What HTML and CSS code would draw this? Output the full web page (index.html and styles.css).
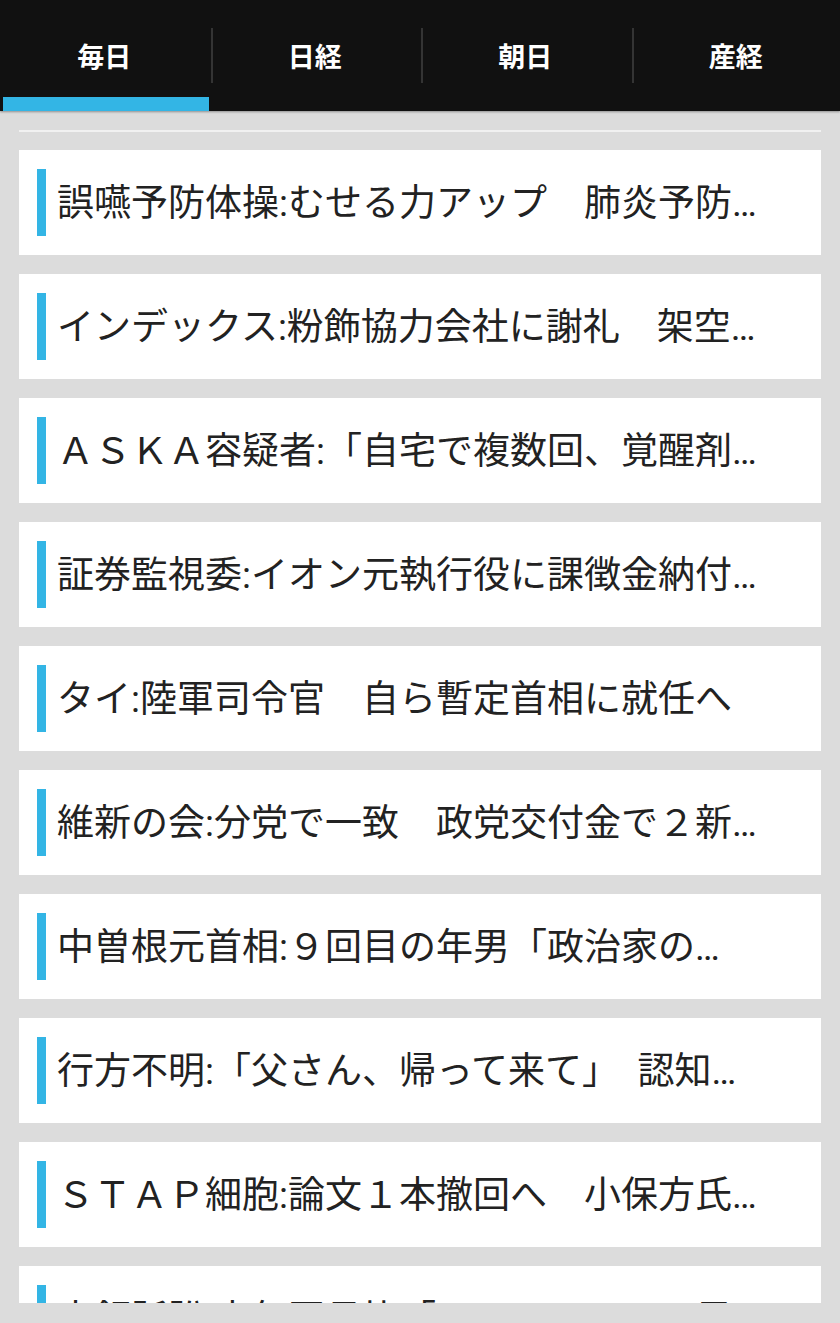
FILE: index.html
```html
<!DOCTYPE html>
<html>
<head>
  <meta charset="utf-8">
  <title>ニュース</title>
  <link rel="stylesheet" href="styles.css">
</head>
<body>
  <!-- Tab bar -->
  <div class="tabs">
    <div class="tab active"><span class="tab-label">毎日</span><span class="tab-indicator"></span></div>
    <div class="tab-divider"></div>
    <div class="tab"><span class="tab-label">日経</span><span class="tab-indicator"></span></div>
    <div class="tab-divider"></div>
    <div class="tab"><span class="tab-label">朝日</span><span class="tab-indicator"></span></div>
    <div class="tab-divider"></div>
    <div class="tab"><span class="tab-label">産経</span><span class="tab-indicator"></span></div>
  </div>
  <!-- News list -->
  <div class="content">
    <div class="rule"></div>
    <div class="list">
      <div class="card"><span class="bar"></span><span class="title">誤嚥予防体操:むせる力アップ　肺炎予防…</span></div>
      <div class="card"><span class="bar"></span><span class="title">インデックス:粉飾協力会社に謝礼　架空…</span></div>
      <div class="card"><span class="bar"></span><span class="title">ＡＳＫＡ容疑者:「自宅で複数回、覚醒剤…</span></div>
      <div class="card"><span class="bar"></span><span class="title">証券監視委:イオン元執行役に課徴金納付…</span></div>
      <div class="card"><span class="bar"></span><span class="title">タイ:陸軍司令官　自ら暫定首相に就任へ</span></div>
      <div class="card"><span class="bar"></span><span class="title">維新の会:分党で一致　政党交付金で２新…</span></div>
      <div class="card"><span class="bar"></span><span class="title">中曽根元首相:９回目の年男「政治家の…</span></div>
      <div class="card"><span class="bar"></span><span class="title">行方不明:「父さん、帰って来て」　認知…</span></div>
      <div class="card"><span class="bar"></span><span class="title">ＳＴＡＰ細胞:論文１本撤回へ　小保方氏…</span></div>
      <div class="card"><span class="bar"></span><span class="title">大飯訴訟:去年同月比「２０００万円不足…</span></div>
    </div>
  </div>
</body>
</html>
```
FILE: styles.css
```css
/*Page*/
html, body {
  margin: 0;
  height: 1323px;
  overflow: hidden;
}
body {
  background-color: #dcdcdc;
  font-family: Roboto, "Noto Sans CJK JP", sans-serif;
}
/*Tab bar*/
.tabs {
  display: flex;
  align-items: stretch;
  height: 111px;
  background-color: #111111;
  box-shadow: 0 1px 2px rgba(0, 0, 0, 0.35);
  position: relative;
}
.tab {
  flex: 1;
  display: flex;
  flex-direction: column;
  padding-top: 14px;
}
.tab-label {
  flex: 1;
  display: flex;
  align-items: center;
  justify-content: center;
  color: #ffffff;
  font-size: 27px;
  font-weight: bold;
}
.tab-indicator {
  height: 14px;
  margin-left: 3px;
}
.tab.active .tab-indicator {
  background-color: #33b5e5;
}
.tab-divider {
  align-self: center;
  width: 2px;
  height: 55px;
  margin-left: 2px;
  margin-right: -2px;
  background-color: #343434;
}
/*Content area*/
.content {
  padding: 19px 19px 0;
}
.rule {
  height: 2px;
  background-color: #f1f1f1;
  margin-bottom: 18px;
}
.list {
  height: 1153px;
  overflow: hidden;
}
/*News card*/
.card {
  display: flex;
  align-items: center;
  height: 105px;
  box-sizing: border-box;
  padding: 0 18px;
  margin-bottom: 19px;
  background-color: #ffffff;
}
.bar {
  flex: none;
  width: 9px;
  height: 67px;
  background-color: #33b5e5;
}
.title {
  margin-left: 11px;
  padding-bottom: 6px;
  font-size: 37px;
  color: #222222;
  white-space: nowrap;
  overflow: hidden;
}
```
